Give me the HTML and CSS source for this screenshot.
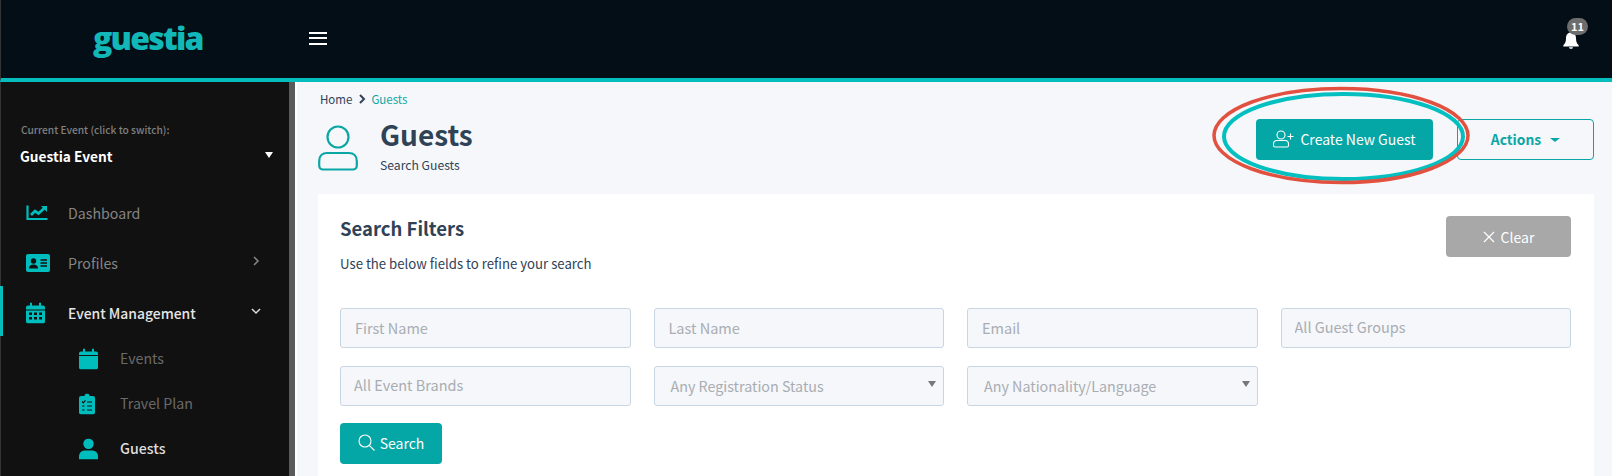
FILE: index.html
```html
<!DOCTYPE html>
<html lang="en">
<head>
<meta charset="utf-8">
<title>Guests</title>
<link rel="stylesheet" href="styles.css">
</head>
<body>
<header class="topbar">
  <div class="brand">guestia</div>
  <button class="burger" aria-label="Menu"><span></span><span></span><span></span></button>
  <div class="bell">
    <svg viewBox="0 0 16 17" width="16" height="17"><path fill="#fff" d="M8 0.5C4.6 0.5 3 3 3 6.2 3 10 2 11.4 0.3 13.2V14.4H15.7V13.2C14 11.4 13 10 13 6.2 13 3 11.4 0.5 8 0.5Z"/><path fill="#fff" d="M6 15.2H10C10 16.2 9 16.8 8 16.8S6 16.2 6 15.2Z"/></svg>
    <span class="badge">11</span>
  </div>
</header>
<div class="layout">
  <aside class="sidebar">
    <div class="event-switch">
      <div class="event-label">Current Event (click to switch):</div>
      <div class="event-name"><span>Guestia Event</span><i class="caret-white"></i></div>
    </div>
    <nav class="nav">
      <a class="nav-item">
        <svg class="nav-icon" viewBox="0 0 22 16" width="22" height="16"><path fill="none" stroke="currentColor" stroke-width="2.200" d="M1.5 0.5V14H21.500"/><path fill="none" stroke="currentColor" stroke-width="2.800" d="M5 10L9 6L12.5 8.5L18.5 3"/><path fill="currentColor" d="M15 1H21V7Z"/></svg>
        <span>Dashboard</span>
      </a>
      <a class="nav-item">
        <svg class="nav-icon" viewBox="0 0 24 18" width="24" height="18"><rect width="24" height="18" rx="2" fill="currentColor"/><circle cx="7.5" cy="7" r="2.7" fill="#111"/><path fill="#111" d="M3 14.5C3 11.5 5 10.5 7.5 10.5S12 11.5 12 14.5Z"/><path stroke="#111" stroke-width="1.4" d="M14.5 6H21M14.5 9H21M14.5 12H21"/></svg>
        <span>Profiles</span>
        <svg class="chev" viewBox="0 0 10 10" width="10" height="10"><path fill="none" stroke="#888" stroke-width="1.5" d="M3 1L7 5L3 9"/></svg>
      </a>
      <a class="nav-item active">
        <svg class="nav-icon" viewBox="0 0 19 21" width="19" height="21"><path fill="currentColor" d="M4 0H6V3H13V0H15V3H17Q19 3 19 5V7H0V5Q0 3 2 3H4ZM0 8H19V19Q19 21 17 21H2Q0 21 0 19Z"/><path fill="#111" d="M3 10H6V12.5H3ZM8 10H11V12.5H8ZM13 10H16V12.5H13ZM3 14.5H6V17H3ZM8 14.5H11V17H8ZM13 14.5H16V17H13Z"/></svg>
        <span>Event Management</span>
        <svg class="chev" viewBox="0 0 10 10" width="10" height="10"><path fill="none" stroke="#ddd" stroke-width="1.5" d="M1 3L5 7L9 3"/></svg>
      </a>
      <a class="sub-item">
        <svg class="sub-icon" viewBox="0 0 19 21" width="19" height="21"><path fill="currentColor" d="M4 0H6V3H13V0H15V3H17Q19 3 19 5V6.500H0V5Q0 3 2 3H4ZM0 7.500H19V19Q19 21 17 21H2Q0 21 0 19Z"/></svg>
        <span>Events</span>
      </a>
      <a class="sub-item">
        <svg class="sub-icon" viewBox="0 0 16 21" width="16" height="21"><path fill="currentColor" d="M8 0A2.500 2.500 0 0 1 10.500 2.500H14Q16 2.500 16 4.500V19Q16 21 14 21H2Q0 21 0 19V4.500Q0 2.500 2 2.500H5.500A2.500 2.500 0 0 1 8 0Z"/><path fill="none" stroke="#111" stroke-width="1.2" d="M3 8L4.300 9.300L6.500 6.800M8 8.500H13M8 12.500H13M8 16.500H13M3.200 12.500H5.500M3.200 16.500H5.500"/></svg>
        <span>Travel Plan</span>
      </a>
      <a class="sub-item current">
        <svg class="sub-icon" viewBox="0 0 19 21" width="19" height="21"><circle cx="9.500" cy="5.200" r="5.200" fill="currentColor"/><path fill="currentColor" d="M0 21V18C0 14 3 12 6 12H13C16 12 19 14 19 18V21Z"/></svg>
        <span>Guests</span>
      </a>
    </nav>
  </aside>
  <main class="content">
    <div class="crumbs">
      <span>Home</span>
      <svg viewBox="0 0 8 10" width="8" height="10"><path fill="none" stroke="#2f4256" stroke-width="2" d="M2 1L6 5L2 9"/></svg>
      <a>Guests</a>
    </div>
    <div class="page-head">
      <svg class="page-icon" viewBox="0 0 40 46" width="40" height="46"><circle cx="20" cy="12" r="10.500" fill="none" stroke="currentColor" stroke-width="2.200"/><path fill="none" stroke="currentColor" stroke-width="2.200" d="M9 28H31C35.500 28 38.800 31 38.800 36V40.500C38.800 43 37 44.500 35 44.500H5C3 44.500 1.200 43 1.200 40.500V36C1.200 31 4.500 28 9 28Z"/></svg>
      <div class="page-titles">
        <h1>Guests</h1>
        <p>Search Guests</p>
      </div>
      <button class="btn btn-primary btn-create">
        <svg viewBox="0 0 21 18" width="21" height="18"><circle cx="8" cy="5" r="4" fill="none" stroke="#fff" stroke-width="1.100"/><path fill="none" stroke="#fff" stroke-width="1.100" d="M4 10.500H12C14 10.500 15.500 12 15.500 14V15.500C15.500 16.500 14.800 17 14 17H2C1.200 17 0.500 16.500 0.500 15.500V14C0.500 12 2 10.500 4 10.500Z"/><path stroke="#fff" stroke-width="1.100" d="M14.500 6.500H20.500M17.500 3.500V9.500"/></svg>
        Create New Guest
      </button>
      <button class="btn btn-outline">Actions <i class="caret-teal"></i></button>
    </div>
    <section class="card">
      <div class="card-head">
        <div>
          <h2>Search Filters</h2>
          <p>Use the below fields to refine your search</p>
        </div>
        <button class="btn btn-clear">
          <svg viewBox="0 0 12 12" width="12" height="12"><path stroke="#fff" stroke-width="1.200" d="M1 1L11 11M11 1L1 11"/></svg>
          Clear
        </button>
      </div>
      <div class="filters">
        <input class="field" placeholder="First Name">
        <input class="field" placeholder="Last Name">
        <input class="field" placeholder="Email">
        <input class="field field-tag" placeholder="All Guest Groups">
        <input class="field field-tag" placeholder="All Event Brands">
        <div class="field fake-select"><span>Any Registration Status</span><i class="caret-grey"></i></div>
        <div class="field fake-select"><span>Any Nationality/Language</span><i class="caret-grey"></i></div>
      </div>
      <button class="btn btn-primary btn-search">
        <svg viewBox="0 0 17 17" width="17" height="17"><circle cx="7" cy="7" r="6" fill="none" stroke="#fff" stroke-width="1.100"/><path stroke="#fff" stroke-width="1.100" d="M11.300 11.300L16.500 16.500"/></svg>
        Search
      </button>
    </section>
  </main>
</div>
<svg class="annotation" viewBox="0 0 270 110" width="270" height="110">
  <ellipse cx="137.500" cy="52.500" rx="119.500" ry="42.500" fill="none" stroke="#03bfc0" stroke-width="4"/>
  <ellipse cx="135" cy="51.500" rx="127" ry="47" fill="none" stroke="#e2503f" stroke-width="3.500"/>
</svg>
</body>
</html>
```
FILE: styles.css
```css
* { box-sizing: border-box; }
html, body { margin: 0; height: 476px; overflow: hidden; }
body {
  font-family: "Noto Sans CJK SC", "Noto Sans", sans-serif;
  background: #f5f7fa;
  color: #2f4256;
  position: relative;
}
.topbar {
  height: 82px;
  background: #040e17;
  border-left: 1px solid #333;
  border-bottom: 4px solid #06bdbd;
  display: flex;
  align-items: center;
  position: relative;
}
.brand {
  width: 308px;
  padding-left: 92px;
  padding-bottom: 2px;
  font-family: "Open Sans", sans-serif;
  font-weight: 800;
  font-size: 32px;
  letter-spacing: -1.8px;
  line-height: 76px;
  color: #12b8b8;
}
.burger {
  width: 18px;
  height: 13px;
  padding: 0;
  margin-top: -2px;
  border: 0;
  background: none;
  display: flex;
  flex-direction: column;
  justify-content: space-between;
}
.burger span { display: block; height: 2px; background: #fff; }
.bell { margin-left: auto; margin-right: 33px; margin-top: 2px; position: relative; height: 17px; }
.bell svg { display: block; }
.badge {
  position: absolute;
  left: 4px;
  top: -14px;
  width: 21px;
  height: 17px;
  border-radius: 9px;
  background: #6d6d6d;
  color: #fff;
  font-size: 11px;
  font-weight: 700;
  line-height: 17px;
  text-align: center;
}
.layout { display: flex; height: 394px; }
.sidebar {
  width: 295px;
  flex: none;
  background: #111;
  border-left: 1px solid #333;
  border-right: 6px solid #5a5a5a;
  position: relative;
}
.sidebar::after {
  content: "";
  position: absolute;
  right: -8px;
  top: 0;
  bottom: 0;
  width: 2px;
  background: #fff;
}
.event-switch { padding: 39px 16px 0 20px; }
.event-label { font-size: 10.200px; line-height: 18px; font-weight: 500; color: #808080; white-space: nowrap; }
.event-name {
  display: flex;
  align-items: center;
  justify-content: space-between;
  margin-top: 5px;
  font-size: 13.700px;
  line-height: 24px;
  font-weight: 700;
  color: #fff;
  margin-left: -1px;
}
.caret-white { width: 0; height: 0; border: 4.500px solid transparent; border-top: 6px solid #fff; border-bottom: 0; margin-top: -3px; }
.nav { margin-top: 18px; }
.nav-item {
  height: 50px;
  display: flex;
  align-items: center;
  color: #858585;
  font-size: 14.200px;
  position: relative;
  padding-left: 67px;
  padding-top: 3px;
}
.nav-item .nav-icon { position: absolute; left: 25px; top: calc(50% + 2px); transform: translateY(-50%); color: #00bdbd; }
.nav-item .chev { position: absolute; right: 28px; top: 20px; }
.nav-item.active { color: #e6e6e6; font-weight: 500; font-size: 13.900px; }
.nav-item.active::before { content: ""; position: absolute; left: -1px; top: 0; bottom: 0; width: 3px; background: #06bdbd; }
.sub-item {
  height: 45px;
  display: flex;
  align-items: center;
  color: #6a6a6a;
  font-size: 14.200px;
  position: relative;
  padding-left: 119px;
  padding-bottom: 2px;
}
.sub-icon { position: absolute; left: 78px; top: 50%; transform: translateY(-50%); color: #00bdbd; }
.sub-item.current { color: #ddd; font-weight: 500; }
.content { flex: 1; min-width: 0; padding: 8px 18px 0 23px; }
.crumbs { display: flex; align-items: center; gap: 6px; font-size: 11.500px; line-height: 18px; margin-left: 2px; }
.crumbs a { color: #0aa6a6; margin-left: -1px; }
.page-head { display: flex; align-items: flex-start; height: 86px; padding-top: 11px; }
.page-icon { color: #0aa6a6; margin-top: 6px; flex: none; }
.page-titles { margin-left: 22px; margin-top: -3px; }
.page-titles h1 { margin: 0; font-size: 28px; line-height: 36px; font-weight: 600; color: #2f4256; }
.page-titles p { margin: 3px 0 0; font-size: 12.200px; line-height: 20px; }
.btn {
  font-family: inherit;
  border-radius: 4px;
  border: 1px solid transparent;
  height: 41px;
  font-size: 14px;
  font-weight: 400;
  display: inline-flex;
  align-items: center;
  justify-content: center;
  padding: 0;
}
.btn-primary { background: #05a6a6; color: #fff; padding-bottom: 2px; }
.btn-create { width: 177px; margin-left: auto; gap: 6px; }
.btn-outline { width: 137px; margin-left: 24px; background: transparent; border-color: #0aa6a6; color: #0aa6a6; font-weight: 600; font-size: 13.800px; gap: 9px; padding-bottom: 2px; }
.caret-teal { width: 0; height: 0; border: 5px solid transparent; border-top: 4px solid #0aa6a6; border-bottom: 0; margin-top: 3px; }
.card { background: #fff; height: 282px; padding: 22px 23px 0 22px; }
.card-head { display: flex; justify-content: space-between; align-items: flex-start; height: 92px; }
.card-head h2 { margin: 0; font-size: 18.500px; line-height: 24px; font-weight: 700; color: #2f4256; }
.card-head p { margin: 13px 0 0; font-size: 13.200px; line-height: 22px; }
.btn-clear { width: 125px; background: #a8a8a8; color: #fff; gap: 6px; }
.filters { display: grid; grid-template-columns: repeat(4, 1fr); column-gap: 23px; row-gap: 18px; }
.field {
  height: 40px;
  width: 100%;
  min-width: 0;
  border: 1px solid #c8d5e3;
  border-radius: 3px;
  background: #f5f7fa;
  padding: 0 14px 1px;
  font-family: inherit;
  font-size: 14.500px;
  color: #a9adb3;
  outline: none;
}
.field::placeholder { color: #a9adb3; opacity: 1; }
.field-tag { padding: 0 13px 3px; }
.fake-select { display: flex; align-items: center; justify-content: space-between; padding: 0 7px 1px 16px; font-size: 14.300px; }
.caret-grey { width: 0; height: 0; border: 4.500px solid transparent; border-top: 6px solid #777; border-bottom: 0; margin-top: -3px; }
.btn-search { width: 102px; margin-top: 17px; gap: 5px; }
.annotation { position: absolute; left: 1206px; top: 84px; pointer-events: none; }
```
